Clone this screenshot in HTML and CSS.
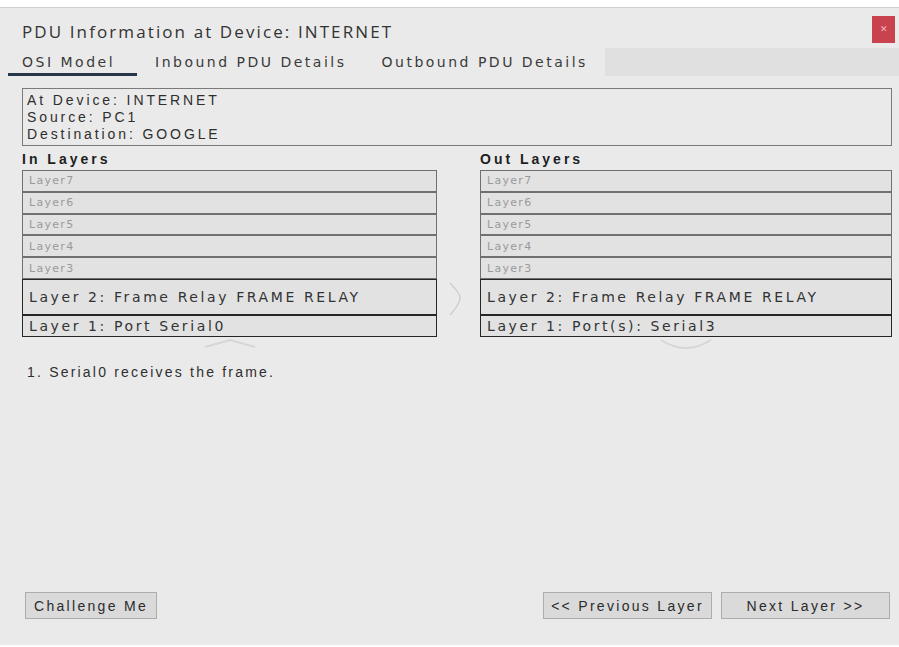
FILE: index.html
```html
<!DOCTYPE html>
<html lang="en">
<head>
<meta charset="utf-8">
<title>PDU Information at Device: INTERNET</title>
<link rel="stylesheet" href="styles.css">
</head>
<body>
<div class="window">
  <header class="titlebar">
    <span class="title">PDU Information at Device: INTERNET</span>
    <button class="close" type="button" aria-label="Close">&#x2715;</button>
  </header>

  <nav class="tabs">
    <span class="tab active">OSI Model</span>
    <span class="tab">Inbound PDU Details</span>
    <span class="tab">Outbound PDU Details</span>
    <span class="tab-fill"></span>
  </nav>

  <main class="content">
    <div class="info">
      <div>At Device: INTERNET</div>
      <div>Source: PC1</div>
      <div>Destination: GOOGLE</div>
    </div>

    <div class="layers">
      <section class="col">
        <h3 class="col-title">In Layers</h3>
        <ul class="stack">
          <li class="layer off">Layer7</li>
          <li class="layer off">Layer6</li>
          <li class="layer off">Layer5</li>
          <li class="layer off">Layer4</li>
          <li class="layer off">Layer3</li>
          <li class="layer on tall">Layer 2: Frame Relay FRAME RELAY</li>
          <li class="layer on">Layer 1: Port Serial0</li>
        </ul>
        <svg class="chev" width="52" height="10" viewBox="0 0 52 10">
          <path d="M1 9 L26 2 L51 9" fill="none" stroke="#d6d6d6" stroke-width="2"/>
        </svg>
      </section>

      <div class="between">
        <svg width="14" height="34" viewBox="0 0 14 34">
          <path d="M2 1 Q13 12 12 17 Q11 23 2 33" fill="none" stroke="#cfcfcf" stroke-width="1.5"/>
        </svg>
      </div>

      <section class="col">
        <h3 class="col-title">Out Layers</h3>
        <ul class="stack">
          <li class="layer off">Layer7</li>
          <li class="layer off">Layer6</li>
          <li class="layer off">Layer5</li>
          <li class="layer off">Layer4</li>
          <li class="layer off">Layer3</li>
          <li class="layer on tall">Layer 2: Frame Relay FRAME RELAY</li>
          <li class="layer on">Layer 1: Port(s): Serial3</li>
        </ul>
        <svg class="chev" width="52" height="12" viewBox="0 0 52 12">
          <path d="M1 2 Q26 18 51 2" fill="none" stroke="#d6d6d6" stroke-width="2"/>
        </svg>
      </section>
    </div>

    <p class="desc">1. Serial0 receives the frame.</p>

    <footer class="actions">
      <button class="btn" type="button">Challenge Me</button>
      <span class="spacer"></span>
      <button class="btn wide" type="button">&lt;&lt; Previous Layer</button>
      <button class="btn wide" type="button">Next Layer &gt;&gt;</button>
    </footer>
  </main>
</div>
</body>
</html>
```

FILE: styles.css
```css
* { box-sizing: border-box; }

html, body {
  margin: 0;
  padding: 0;
  background: #ffffff;
}

body {
  padding-top: 7px;
  font-family: "Liberation Sans", Arial, sans-serif;
  color: #2b2b2b;
}

/* dialog frame */
.window {
  height: 638px;
  background: #eaeaea;
  border-top: 1px solid #cfcfcf;
  display: flex;
  flex-direction: column;
}

.titlebar {
  height: 40px;
  display: flex;
  align-items: center;
  padding-left: 22px;
  position: relative;
}

.title {
  font-family: "Open Sans", "Noto Sans", sans-serif;
  font-size: 17px;
  letter-spacing: 2.1px;
  color: #333;
  padding-top: 6px;
  white-space: nowrap;
}

.close {
  position: absolute;
  right: 4px;
  top: 8px;
  width: 23px;
  height: 27px;
  border: 0;
  padding: 0;
  background: #c9434f;
  color: #f3b9bf;
  font-size: 9px;
  line-height: 27px;
  text-align: center;
}

/* tab strip */
.tabs {
  height: 28px;
  display: flex;
  align-items: stretch;
  padding-left: 8px;
}

.tab {
  font-family: "DejaVu Sans", Verdana, sans-serif;
  font-size: 14px;
  letter-spacing: 2.5px;
  color: #3a3a3a;
  padding: 6px 17px 0 18px;
  border-bottom: 3px solid transparent;
  white-space: nowrap;
}

.tab.active {
  width: 129px;
  padding-left: 14px;
  padding-right: 0;
  border-bottom-color: #27374b;
}

.tab-fill {
  flex: 1;
  background: #e0e0e0;
}

/* page body */
.content {
  flex: 1;
  display: flex;
  flex-direction: column;
  padding: 12px 7px 26px 22px;
}

.info {
  border: 1px solid #7a7a7a;
  padding: 3px 4px 2px;
  font-size: 14px;
  letter-spacing: 2.9px;
  line-height: 17px;
  color: #2e2e2e;
  white-space: nowrap;
}

.layers {
  display: grid;
  grid-template-columns: 415px 43px 1fr;
  margin-top: 5px;
}

.col {
  display: flex;
  flex-direction: column;
}

.col-title {
  margin: 0;
  font-size: 14px;
  font-weight: bold;
  letter-spacing: 3px;
  line-height: 19px;
  color: #1e1e1e;
  padding-bottom: 1px;
  margin-top: -1px;
}

.stack {
  list-style: none;
  margin: 0;
  padding: 0;
}

.layer {
  font-family: "DejaVu Sans", Verdana, sans-serif;
  display: flex;
  align-items: center;
  padding-left: 6px;
  background: #e2e2e2;
  white-space: nowrap;
}

.layer.off {
  height: 21.8px;
  border: 1px solid #707070;
  font-size: 11px;
  letter-spacing: 1.3px;
  color: #9a9a9a;
}

.layer.on {
  height: 22px;
  border: 1px solid #262626;
  font-size: 14px;
  letter-spacing: 2.6px;
  color: #333;
}

.layer.tall { height: 36px; }

.chev {
  align-self: center;
  margin-top: 1px;
}

.between {
  display: flex;
  justify-content: center;
  padding: 131px 7px 0 0;
}

.desc {
  margin: 14px 0 0 5px;
  font-size: 14px;
  letter-spacing: 2.2px;
  color: #2f2f2f;
}

/* buttons */
.actions {
  margin-top: auto;
  display: flex;
  align-items: center;
  gap: 9px;
  padding-right: 2px;
}

.spacer { flex: 1; }

.btn {
  height: 27px;
  padding: 0 4px;
  border: 1px solid #adadad;
  background: #dadada;
  font-family: "Liberation Sans", Arial, sans-serif;
  font-size: 14px;
  letter-spacing: 2.3px;
  color: #2b2b2b;
  white-space: nowrap;
}

.btn:first-child { margin-left: 3px; width: 132px; }

.btn.wide { width: 169px; }
```
